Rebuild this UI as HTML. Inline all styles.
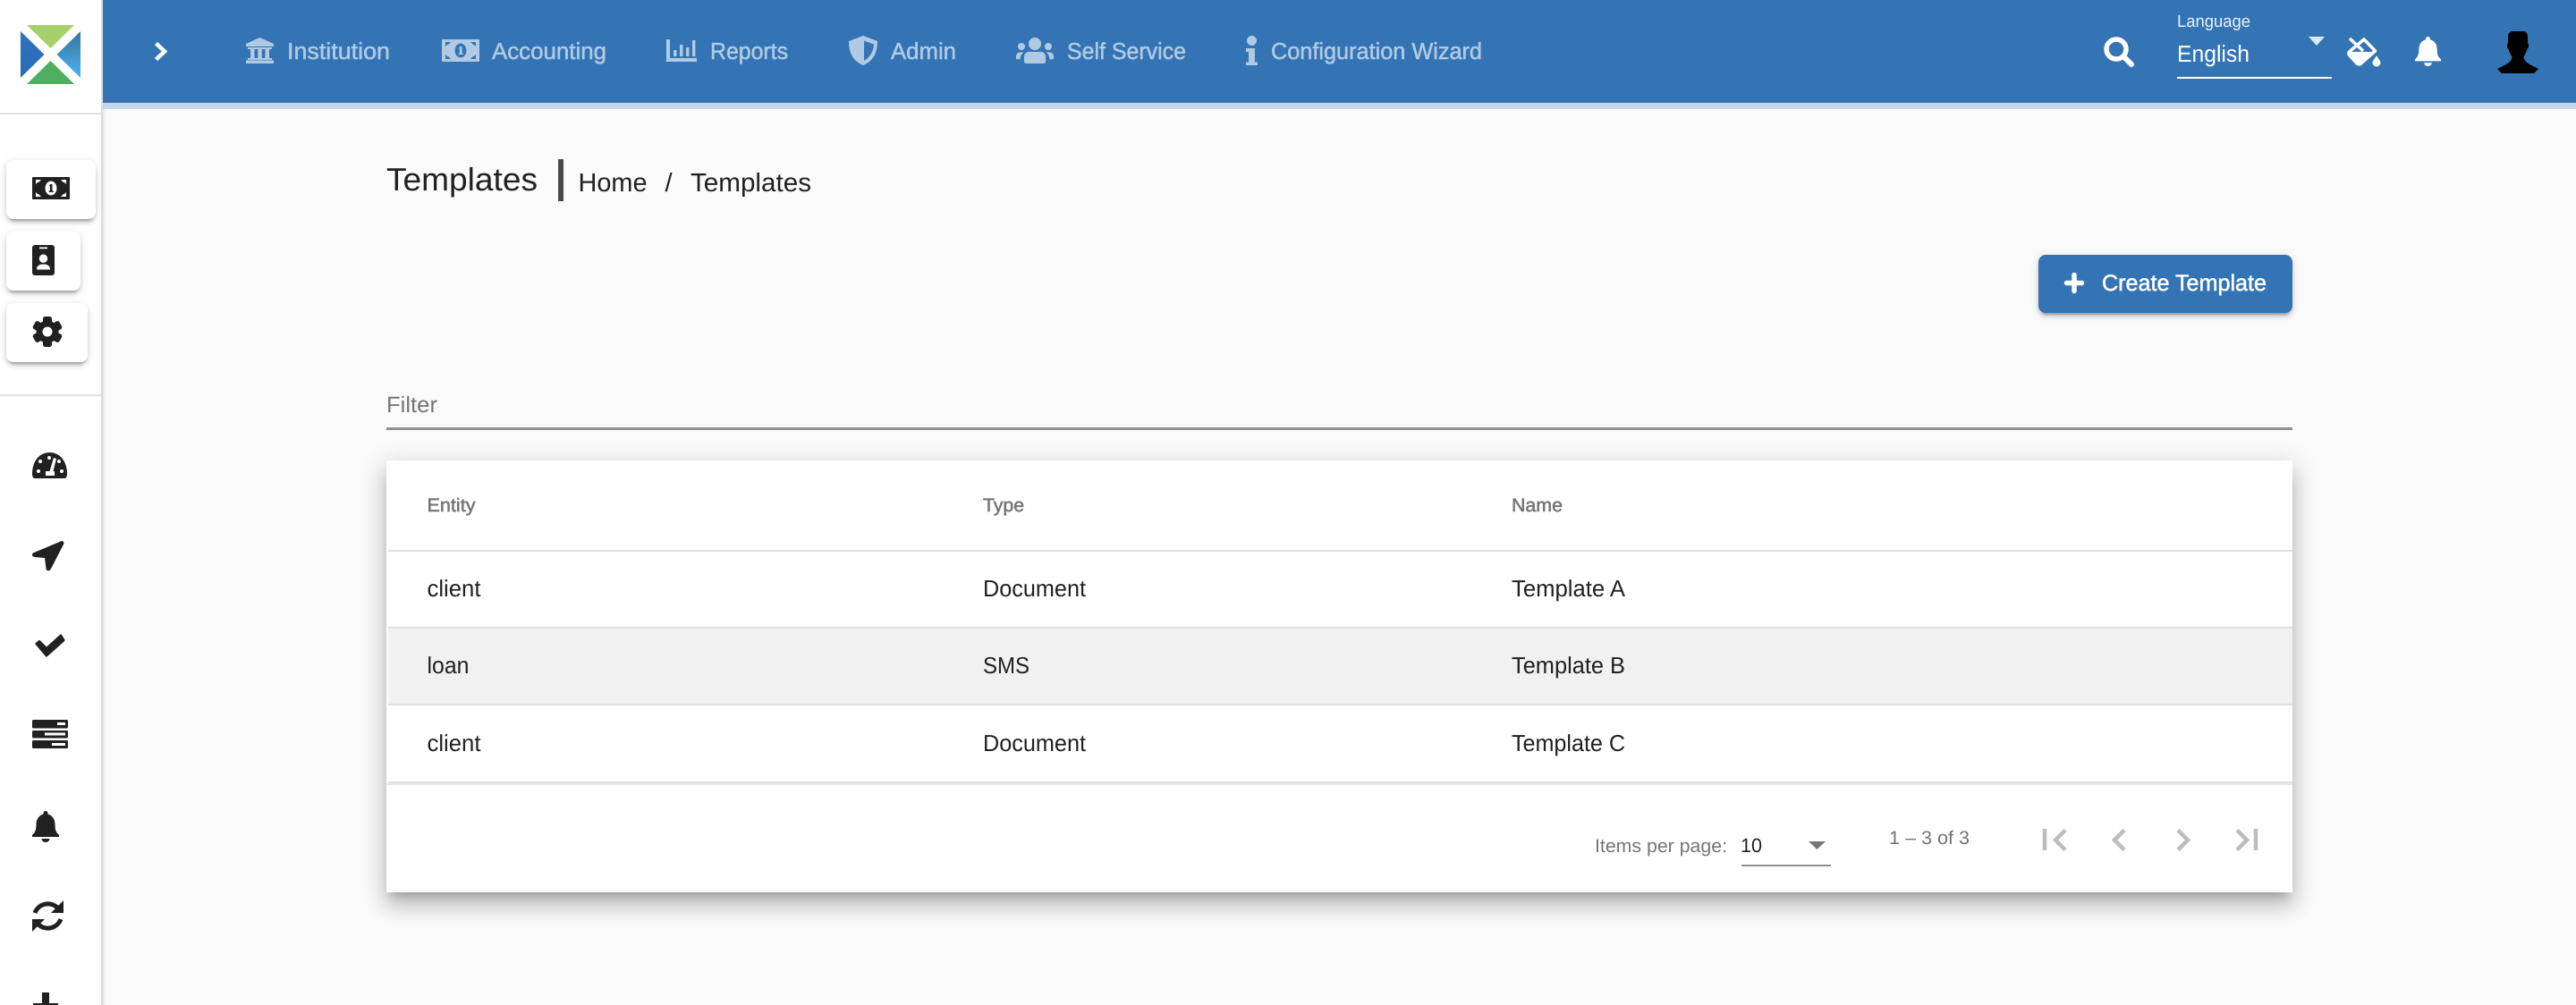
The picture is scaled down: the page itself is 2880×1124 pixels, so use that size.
<!DOCTYPE html>
<html lang="en"><head><meta charset="utf-8"><title>Templates</title>
<style>
html,body{margin:0;padding:0;width:2880px;height:1124px;overflow:hidden;background:#fafafa}
.b{position:absolute;box-sizing:border-box}
svg{position:absolute;left:0;top:0}
text{font-family:"Liberation Sans",sans-serif;text-rendering:geometricPrecision}
.nav{font-size:26px;fill:#b0cae4;stroke:#b0cae4;stroke-width:.5px}
.c{font-size:26px;fill:#212121}
.h{font-size:21px;fill:#757575;stroke:#757575;stroke-width:.55px}
.p{font-size:21px;fill:#757575}
</style></head><body>
<div class="b" style="left:115px;top:0;width:4px;height:1124px;background:linear-gradient(90deg,#e6e6e6,#fafafa)"></div>
<div class="b" style="left:115px;top:0;width:2765px;height:115px;background:#3474b4"></div>
<div class="b" style="left:115px;top:115px;width:2765px;height:7px;background:#c4d8ea"></div>
<div class="b" style="left:0;top:0;width:113px;height:1124px;background:#fff"></div>
<div class="b" style="left:113px;top:0;width:2px;height:1124px;background:#dcdcdc"></div>
<div class="b" style="left:0;top:126px;width:113px;height:2px;background:#e2e2e2"></div>
<div class="b" style="left:0;top:441px;width:113px;height:2px;background:#e2e2e2"></div>
<div class="b" style="left:7px;top:179px;width:100px;height:66px;background:#fff;border-radius:8px;box-shadow:0 6px 2px -4px rgba(0,0,0,.2),0 4px 4px 0 rgba(0,0,0,.14),0 2px 10px 0 rgba(0,0,0,.12)"></div>
<div class="b" style="left:7px;top:259px;width:83px;height:66px;background:#fff;border-radius:8px;box-shadow:0 6px 2px -4px rgba(0,0,0,.2),0 4px 4px 0 rgba(0,0,0,.14),0 2px 10px 0 rgba(0,0,0,.12)"></div>
<div class="b" style="left:7px;top:339px;width:91px;height:66px;background:#fff;border-radius:8px;box-shadow:0 6px 2px -4px rgba(0,0,0,.2),0 4px 4px 0 rgba(0,0,0,.14),0 2px 10px 0 rgba(0,0,0,.12)"></div>
<div class="b" style="left:2279px;top:285px;width:284px;height:65px;background:#3474b4;border-radius:8px;box-shadow:0 6px 2px -4px rgba(0,0,0,.2),0 4px 4px 0 rgba(0,0,0,.14),0 2px 10px 0 rgba(0,0,0,.12)"></div>
<div class="b" style="left:624px;top:178px;width:6px;height:47px;background:#4a4a4a"></div>
<div class="b" style="left:432px;top:478px;width:2131px;height:3px;background:#8f8f8f"></div>
<div class="b" style="left:432px;top:515px;width:2131px;height:483px;background:#fff;box-shadow:0 10px 10px -6px rgba(0,0,0,.2),0 16px 20px 2px rgba(0,0,0,.14),0 6px 28px 4px rgba(0,0,0,.12)"></div>
<div class="b" style="left:434px;top:615px;width:2129px;height:2px;background:#e0e0e0"></div>
<div class="b" style="left:434px;top:703px;width:2129px;height:85px;background:#f1f1f1"></div>
<div class="b" style="left:434px;top:701px;width:2129px;height:2px;background:#e0e0e0"></div>
<div class="b" style="left:434px;top:787px;width:2129px;height:2px;background:#e0e0e0"></div>
<div class="b" style="left:434px;top:874px;width:2129px;height:2px;background:#e0e0e0"></div>
<div class="b" style="left:432px;top:876px;width:2131px;height:2px;background:#e8e8e8"></div>
<div class="b" style="left:1947px;top:967px;width:100px;height:2px;background:#8f8f8f"></div>

<svg width="2880" height="1124" viewBox="0 0 2880 1124" xmlns="http://www.w3.org/2000/svg">
<defs><linearGradient id="lg" x1="0" y1="0" x2="0" y2="1"><stop offset="0" stop-color="#37739f"/><stop offset="1" stop-color="#4db1f0"/></linearGradient>
<linearGradient id="lb" x1="0" y1="0" x2="0" y2="1"><stop offset="0" stop-color="#2f72bb"/><stop offset="1" stop-color="#2a6ab6"/></linearGradient></defs>
<!-- logo -->
<polygon points="30,28 83,28 56.500,54" fill="#a5d06a"/>
<polygon points="30,94 83,94 56.500,68" fill="#50ae60"/>
<polygon points="23,35 23,87 49.500,61" fill="url(#lb)"/>
<polygon points="90,35 90,87 63.500,61" fill="url(#lg)"/>
<!-- chevron -->
<path d="M174.500 48.500L184 57.500L174.500 66.500" fill="none" stroke="#fff" stroke-width="4.500"/>
<!-- nav icons -->
<g fill="#b0cae4">
<path d="M290.500 42 L306 49 V52 H275 V49Z"/><rect x="277" y="53" width="27" height="2"/><rect x="280" y="55" width="4.500" height="10"/><rect x="288.300" y="55" width="4.500" height="10"/><rect x="296.500" y="55" width="4.500" height="10"/><rect x="277" y="65" width="27" height="2"/><rect x="275" y="67.500" width="31" height="3.500"/>
<path fill-rule="evenodd" d="M495 44H535a1 1 0 0 1 1 1V68a1 1 0 0 1-1 1H495a1 1 0 0 1-1-1V45a1 1 0 0 1 1-1Z M498 47 v5 l2-2 h1 l3-3Z M532 47 h-6 l3 3 h1 l2 2Z M498 66 v-5 l2 2 h1 l3 3Z M532 66 h-6 l3-3 h1 l2-2Z M515 48.500 a6.500 8 0 1 0 .01 0Z"/>
<path d="M514 52 h2.500 v7.500 h1.300 v1.500 h-5.200 v-1.500 h1.300 v-5.500 h-1Z"/>
<path d="M745 44h4v21h30v4h-34Z"/><rect x="753" y="56" width="3.400" height="7"/><rect x="760" y="50" width="3.400" height="13"/><rect x="767" y="53" width="3.400" height="10"/><rect x="774" y="45" width="3.400" height="18"/>
<path fill-rule="evenodd" d="M965 40 L981 46 C981 58 977 68 965 73 C953 68 949 58 949 46Z M966 45.500 V68 C973 64 976.500 57 977 49.500Z"/>
<circle cx="1157" cy="49" r="7"/><path d="M1150 58h14c3 0 5 2.500 5 6v5c0 1.200-1 2-2 2h-20c-1 0-2-.8-2-2v-5c0-3.500 2-6 5-6Z"/><circle cx="1142" cy="52" r="4"/><circle cx="1172" cy="52" r="4"/><path d="M1136 66v-3c0-2.500 2-4.500 4.500-4.500h4c-2.500 2-4 4-4 8Z"/><path d="M1178 66v-3c0-2.500-2-4.500-4.500-4.500h-4c2.500 2 4 4 4 8Z"/>
<circle cx="1399.500" cy="45.500" r="5.500"/><path d="M1393 54h10v15.500h3V73h-13v-3.500h3V58h-3Z"/>
</g>
<g>
<text class="nav" x="321" y="66" textLength="115" lengthAdjust="spacingAndGlyphs">Institution</text>
<text class="nav" x="550" y="66" textLength="128" lengthAdjust="spacingAndGlyphs">Accounting</text>
<text class="nav" x="794" y="66" textLength="87" lengthAdjust="spacingAndGlyphs">Reports</text>
<text class="nav" x="996" y="66" textLength="73" lengthAdjust="spacingAndGlyphs">Admin</text>
<text class="nav" x="1193" y="66" textLength="133" lengthAdjust="spacingAndGlyphs">Self Service</text>
<text class="nav" x="1421" y="66" textLength="236" lengthAdjust="spacingAndGlyphs">Configuration Wizard</text>
</g>
<!-- right header -->
<circle cx="2366" cy="55" r="11" fill="none" stroke="#fff" stroke-width="5.500"/>
<path d="M2375 64L2383 72" stroke="#fff" stroke-width="6" stroke-linecap="round"/>
<text x="2434" y="30" font-size="19" fill="#e8f0f8" textLength="82" lengthAdjust="spacingAndGlyphs">Language</text>
<text x="2434" y="69" font-size="26" fill="#fff" textLength="81" lengthAdjust="spacingAndGlyphs">English</text>
<rect x="2434" y="86" width="173" height="2" fill="#fff"/>
<polygon points="2581,41 2599,41 2590,51" fill="#dce8f3"/>
<g fill="#fff">
<path d="M2643 44L2655.500 57L2639 71.500Q2637 72.500 2635 71L2626.500 61.500Q2625 59.500 2627 57.500Z" fill="none" stroke="#fff" stroke-width="3.500" stroke-linejoin="round"/>
<path d="M2626 58H2655L2639 71.500Q2637 72.500 2635 71L2626.500 61.500Z"/>
<path d="M2627 43L2642 57" stroke="#fff" stroke-width="3.500" fill="none"/>
<path d="M2657 62C2659 66 2661.500 68 2661.500 70A4.500 4.500 0 0 1 2652.500 70C2652.500 68 2655 66 2657 62Z"/>
<path transform="translate(2700 41) scale(.967 .943)" d="M15 0a2.500 2.500 0 0 1 2.500 2.500v1C23 5 25.500 10 25.500 15C25.500 22 27 24 30 27V29H0V27C3 24 4.500 22 4.500 15C4.500 10 7 5 12.500 3.500v-1A2.500 2.500 0 0 1 15 0Z M10.500 31h9a4.500 4 0 0 1-9 0Z"/>
</g>
<path d="M2810 35H2821C2825 35 2826 38 2826 42V48L2827 50V53L2825 56C2824 60 2822 62 2821.500 64C2822 68 2826 71 2830 73L2838 77L2833 82H2797L2792 77L2800 73C2804 71 2808 68 2808.500 64C2808 62 2806 60 2805 56L2803 53V50L2804 48V42C2804 38 2805 35 2810 35Z" fill="#000"/>
<!-- sidebar icons -->
<g fill="#212121">
<g transform="translate(-458 154)">
<path fill-rule="evenodd" d="M495 44H535a1 1 0 0 1 1 1V68a1 1 0 0 1-1 1H495a1 1 0 0 1-1-1V45a1 1 0 0 1 1-1Z M498 47 v5 l2-2 h1 l3-3Z M532 47 h-6 l3 3 h1 l2 2Z M498 66 v-5 l2 2 h1 l3 3Z M532 66 h-6 l3-3 h1 l2-2Z M515 48.500 a6.500 8 0 1 0 .01 0Z"/>
<path d="M514 52 h2.500 v7.500 h1.300 v1.500 h-5.200 v-1.500 h1.300 v-5.500 h-1Z"/>
</g>
<path fill-rule="evenodd" d="M39 274H58a3 3 0 0 1 3 3V305a3 3 0 0 1-3 3H39a3 3 0 0 1-3-3V277a3 3 0 0 1 3-3Z M44 276.500v1.700h9v-1.700Z M48.500 284.500a4.700 4.700 0 1 0 .01 0Z M41 301.500H56C56 297 53 295.500 48.500 295.500S41 297 41 301.500Z"/>
<g>
<circle cx="53" cy="371" r="12.500"/>
<rect x="48" y="354" width="10" height="34" rx="2.500"/>
<rect x="48" y="354" width="10" height="34" rx="2.500" transform="rotate(60 53 371)"/>
<rect x="48" y="354" width="10" height="34" rx="2.500" transform="rotate(120 53 371)"/>
<circle cx="53" cy="371" r="5.500" fill="#fff"/>
</g>
<path d="M36 530C36 516 44 506 55.500 506C67 506 75 516 75 530C75 533 74 535 72 535H39C37 535 36 533 36 530Z"/>
<g fill="#fff"><circle cx="45" cy="516" r="2"/><circle cx="43" cy="527" r="2"/><circle cx="55" cy="512" r="2"/><circle cx="66" cy="516" r="2"/><circle cx="69" cy="527" r="2"/><path d="M60 512L63 513L59.500 527H61V532H51V527H55.500Z"/></g>
<path d="M69 605C71 605 72 607 71 609L57 636C55.500 639 52 639 51.500 636L50 624L38.500 623C35.500 622.500 35 619 38 618Z"/>
<polygon points="41,720 44,717.500 52,725.500 68,711 71,716 52,733" stroke="#212121" stroke-width="3" stroke-linejoin="round"/>
<rect x="36" y="805" width="40" height="9.500" rx="1.500"/><rect x="36" y="817" width="40" height="8.500" rx="1.500"/><rect x="36" y="828" width="40" height="9" rx="1.500"/>
<g fill="#fff"><rect x="64" y="808" width="9" height="3"/><rect x="50" y="819.500" width="23" height="3"/><rect x="58" y="831" width="15" height="3"/></g>
<path transform="translate(36 907)" d="M15 0a2.500 2.500 0 0 1 2.500 2.500v1C23 5 25.500 10 25.500 15C25.500 22 27 24 30 27V29H0V27C3 24 4.500 22 4.500 15C4.500 10 7 5 12.500 3.500v-1A2.500 2.500 0 0 1 15 0Z M10.500 31h9a4.500 4 0 0 1-9 0Z"/>
<path d="M39 1021A15.500 15.500 0 0 1 64 1015M68 1028A15.500 15.500 0 0 1 43 1034" fill="none" stroke="#212121" stroke-width="5"/>
<polygon points="71,1007 71,1021 57,1021"/><polygon points="36,1042 36,1028 50,1028"/>
<path d="M47 1110h8v12h10v9H55v13H47V1131H37v-9H47Z"/>
</g>
<!-- page text -->
<text x="432" y="213" font-size="36" fill="#212121" textLength="169" lengthAdjust="spacingAndGlyphs">Templates</text>
<text x="646.500" y="214" font-size="29" fill="#212121" textLength="77" lengthAdjust="spacingAndGlyphs">Home</text>
<text x="743.500" y="214" font-size="29" fill="#212121">/</text>
<text x="772" y="214" font-size="29" fill="#212121" textLength="135" lengthAdjust="spacingAndGlyphs">Templates</text>
<text x="432" y="461" font-size="25" fill="#757575" textLength="57" lengthAdjust="spacingAndGlyphs">Filter</text>
<path d="M2319 307.500V325.500M2310.500 316.500H2327.500" stroke="#fff" stroke-width="5.500" stroke-linecap="round"/>
<text x="2350" y="325" font-size="25.500" fill="#fff" stroke="#fff" stroke-width=".5" textLength="184" lengthAdjust="spacingAndGlyphs">Create Template</text>
<text class="h" x="477.500" y="572" textLength="54" lengthAdjust="spacingAndGlyphs">Entity</text>
<text class="h" x="1099" y="572" textLength="46" lengthAdjust="spacingAndGlyphs">Type</text>
<text class="h" x="1690" y="572" textLength="57" lengthAdjust="spacingAndGlyphs">Name</text>
<text class="c" x="477.500" y="667" textLength="60" lengthAdjust="spacingAndGlyphs">client</text>
<text class="c" x="1099" y="667" textLength="115" lengthAdjust="spacingAndGlyphs">Document</text>
<text class="c" x="1690" y="667" textLength="127" lengthAdjust="spacingAndGlyphs">Template A</text>
<text class="c" x="477.500" y="753" textLength="47" lengthAdjust="spacingAndGlyphs">loan</text>
<text class="c" x="1099" y="753" textLength="52" lengthAdjust="spacingAndGlyphs">SMS</text>
<text class="c" x="1690" y="753" textLength="127" lengthAdjust="spacingAndGlyphs">Template B</text>
<text class="c" x="477.500" y="840" textLength="60" lengthAdjust="spacingAndGlyphs">client</text>
<text class="c" x="1099" y="840" textLength="115" lengthAdjust="spacingAndGlyphs">Document</text>
<text class="c" x="1690" y="840" textLength="127" lengthAdjust="spacingAndGlyphs">Template C</text>
<text class="p" x="1783" y="953" textLength="148" lengthAdjust="spacingAndGlyphs">Items per page:</text>
<text x="1946" y="953" font-size="22" fill="#212121" textLength="24" lengthAdjust="spacingAndGlyphs">10</text>
<polygon points="2022,941 2041,941 2031.500,950" fill="#757575"/>
<text class="p" x="2112" y="944" textLength="90" lengthAdjust="spacingAndGlyphs">1 – 3 of 3</text>
<g fill="none" stroke="#bdbdbd" stroke-width="4.500">
<path d="M2286 927V951M2309 928.500L2298 939.500L2309 950.500"/>
<path d="M2375 928.500L2364 939.500L2375 950.500"/>
<path d="M2435 928.500L2446 939.500L2435 950.500"/>
<path d="M2501 928.500L2512 939.500L2501 950.500M2522 927V951"/>
</g>
</svg>
</body></html>
